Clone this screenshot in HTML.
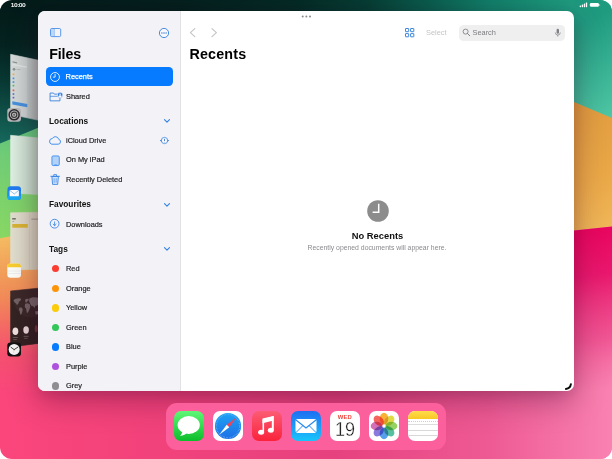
<!DOCTYPE html>
<html><head><meta charset="utf-8">
<style>
html,body{margin:0;padding:0;background:#fff;}
body{width:612px;height:459px;overflow:hidden;position:relative;font-family:"Liberation Sans",sans-serif;}
#screen{position:absolute;left:0;top:0;width:612px;height:459px;border-radius:12px;overflow:hidden;background:none;}
#wall{position:absolute;left:0;top:0;}
.abs{position:absolute;}
#status-time{left:11px;top:2.200px;color:#fff;font-size:5.850px;line-height:7px;-webkit-text-stroke:0.220px #fff;}
#win{left:38px;top:10.700px;width:536px;height:380.800px;border-radius:7px;overflow:hidden;background:#fff;box-shadow:0 10px 30px rgba(60,0,40,0.36),0 3px 12px rgba(40,0,30,0.08);}
#side{left:0;top:0;width:142px;height:100%;background:#f2f2f7;border-right:0.5px solid #e2e2e6;}
.row{position:absolute;left:28px;font-size:7.4px;color:#1c1c1e;line-height:10px;white-space:nowrap;-webkit-text-stroke:0.180px #1c1c1e;}
.hd{position:absolute;left:11px;font-size:8.3px;font-weight:bold;color:#111;line-height:10px;white-space:nowrap;}
.dot{position:absolute;left:13.500px;width:7.500px;height:7.500px;border-radius:50%;}
.title{font-size:14.300px;font-weight:bold;color:#000;line-height:16px;letter-spacing:0.200px;}
#dock{left:165.5px;top:402.700px;width:280.800px;height:47.200px;border-radius:11px;background:#fb609c;}
.app{position:absolute;top:8.200px;width:30px;height:30px;border-radius:7px;overflow:hidden;}
</style></head><body>
<div id="screen">
<svg id="wall" width="612" height="459" viewBox="0 0 612 459">
<defs>
<linearGradient id="gtop" gradientUnits="userSpaceOnUse" x1="0" y1="0" x2="612" y2="0">
<stop offset="0" stop-color="#031a19"/><stop offset="0.3" stop-color="#03201d"/><stop offset="0.48" stop-color="#032a25"/><stop offset="0.6" stop-color="#053d33"/><stop offset="0.7" stop-color="#095c4d"/><stop offset="0.8" stop-color="#107e68"/><stop offset="0.9" stop-color="#1a957a"/><stop offset="0.94" stop-color="#1f9b80"/><stop offset="1" stop-color="#27a689"/>
</linearGradient>
<linearGradient id="gleftdark" gradientUnits="userSpaceOnUse" x1="0" y1="0" x2="0" y2="145">
<stop offset="0" stop-color="#031a19"/><stop offset="0.3" stop-color="#04221f"/><stop offset="0.55" stop-color="#083732"/><stop offset="0.75" stop-color="#0e4d45"/><stop offset="1" stop-color="#176a5e"/>
</linearGradient>
<linearGradient id="ggreen" gradientUnits="userSpaceOnUse" x1="0" y1="125" x2="0" y2="245">
<stop offset="0" stop-color="#5cc27c"/><stop offset="0.25" stop-color="#70cc76"/><stop offset="0.6" stop-color="#7cd26c"/><stop offset="1" stop-color="#8ad862"/>
</linearGradient>
<linearGradient id="gorange" gradientUnits="userSpaceOnUse" x1="0" y1="236" x2="0" y2="400">
<stop offset="0" stop-color="#f5bc62"/><stop offset="0.2" stop-color="#f1a15a"/><stop offset="0.38" stop-color="#f18958"/><stop offset="0.55" stop-color="#f46a64"/><stop offset="0.72" stop-color="#f4506f"/><stop offset="0.95" stop-color="#fa467b"/><stop offset="1" stop-color="#fa467b"/>
</linearGradient>
<linearGradient id="gbot" gradientUnits="userSpaceOnUse" x1="0" y1="0" x2="612" y2="0">
<stop offset="0" stop-color="#fa467b"/><stop offset="0.25" stop-color="#f2427b"/><stop offset="0.55" stop-color="#e6427f"/><stop offset="0.8" stop-color="#ee5a94"/><stop offset="1" stop-color="#f982b2"/>
</linearGradient>
<linearGradient id="gteal" gradientUnits="userSpaceOnUse" x1="574" y1="0" x2="625" y2="110">
<stop offset="0" stop-color="#1d997e"/><stop offset="0.2" stop-color="#1f9b80"/><stop offset="1" stop-color="#4ec6a4"/>
</linearGradient>
<linearGradient id="gor2" gradientUnits="userSpaceOnUse" x1="574" y1="100" x2="620" y2="230">
<stop offset="0" stop-color="#df9a3e"/><stop offset="0.6" stop-color="#eaa848"/><stop offset="1" stop-color="#f0b85a"/>
</linearGradient>
<linearGradient id="gmag" gradientUnits="userSpaceOnUse" x1="574" y1="228" x2="595" y2="391">
<stop offset="0" stop-color="#e9045e"/><stop offset="0.3" stop-color="#e8126a" stop-opacity="0.95"/><stop offset="0.7" stop-color="#ea3a80" stop-opacity="0.6"/><stop offset="1" stop-color="#ee5a94" stop-opacity="0"/>
</linearGradient>
<linearGradient id="th1" x1="0" y1="0" x2="1" y2="0"><stop offset="0" stop-color="#d6dcdb"/><stop offset="0.55" stop-color="#c6cecc"/><stop offset="0.58" stop-color="#bac4c1"/><stop offset="1" stop-color="#a3aeab"/></linearGradient>
<linearGradient id="th2" x1="0" y1="0" x2="1" y2="0"><stop offset="0" stop-color="#e0efe4"/><stop offset="0.5" stop-color="#cbe0d0"/><stop offset="1" stop-color="#b0c9b6"/></linearGradient>
<linearGradient id="th3" x1="0" y1="0" x2="1" y2="0"><stop offset="0" stop-color="#e1dfd0"/><stop offset="0.5" stop-color="#d9d6c4"/><stop offset="1" stop-color="#c9c5af"/></linearGradient>
<linearGradient id="th4" x1="0" y1="0" x2="1" y2="0"><stop offset="0" stop-color="#3d2b2b"/><stop offset="1" stop-color="#352424"/></linearGradient>
<filter id="b1" x="-20%" y="-20%" width="140%" height="140%"><feGaussianBlur stdDeviation="0.5"/></filter>
</defs>
<!-- bottom -->
<rect x="0" y="340" width="612" height="119" fill="url(#gbot)"/>
<!-- top -->
<rect x="0" y="0" width="612" height="40" fill="url(#gtop)"/>
<!-- left strip -->
<rect x="0" y="8" width="60" height="140" fill="url(#gleftdark)"/>
<polygon points="0,143.500 60,118.700 60,260 0,260" fill="url(#ggreen)"/>
<polygon points="0,238.300 60,227 60,392 0,392" fill="url(#gorange)"/>
<!-- right strip -->
<rect x="560" y="0" width="52" height="130" fill="url(#gteal)"/>
<rect x="540" y="0" width="34" height="11" fill="url(#gtop)"/>
<polygon points="560,96 574,101.900 612,118 612,240 560,240" fill="url(#gor2)"/>
<polygon points="560,232.100 612,226.500 612,459 560,459" fill="url(#gbot)"/>
<polygon points="560,232.100 612,226.500 612,459 574,459 574,391 560,391" fill="url(#gmag)"/>
<!-- stage manager thumbnails -->
<g>
<polygon points="10.600,54.300 40,60.600 40,120.600 10.600,114.300" fill="url(#th1)" stroke="url(#th1)" stroke-width="0.600" stroke-linejoin="round"/>
<rect x="12.300" y="101.300" width="15" height="3.200" fill="#4590dc" transform="skewY(10)" transform-origin="12.300 101.300"/>
<rect x="12.300" y="63.700" width="14.500" height="1.600" rx="0.600" fill="#e2e7e6" opacity="0.750" transform="skewY(10)" transform-origin="12.300 63.700"/><g fill="#8a9393"><rect x="12.500" y="61.300" width="4.600" height="1.100" transform="skewY(12)" transform-origin="12.500 62"/><circle cx="14" cy="69.300" r="1.400"/><rect x="16.500" y="69.300" width="4" height="0.700" opacity="0.600"/></g>
<g><rect x="12.600" y="73.500" width="1.700" height="1.700" fill="#f3a93a"/><rect x="12.600" y="77.500" width="1.700" height="1.700" fill="#4a90e2"/><rect x="12.600" y="81.200" width="1.700" height="1.700" fill="#4a90e2"/><rect x="12.600" y="84.800" width="1.700" height="1.700" fill="#53b868"/><rect x="12.600" y="89.500" width="1.700" height="1.700" fill="#e45a5a"/><rect x="12.600" y="93.200" width="1.700" height="1.700" fill="#5b6fd0"/><rect x="12.600" y="96.800" width="1.700" height="1.700" fill="#6a5fd0"/></g>
<polygon points="10.600,135.300 40,138.100 40,194.500 10.600,193.200" fill="url(#th2)" stroke="url(#th2)" stroke-width="0.600" stroke-linejoin="round"/>
<polygon points="10.600,212.800 40,212.200 40,269.300 10.600,270" fill="url(#th3)" stroke="url(#th3)" stroke-width="0.600" stroke-linejoin="round"/>
<rect x="12.300" y="224" width="15.500" height="3.700" fill="#d6b332"/>
<rect x="12.200" y="218.300" width="3.600" height="1.100" fill="#2a2a2a" opacity="0.850"/><rect x="12.400" y="221.300" width="1.800" height="0.600" fill="#8a8a80"/><rect x="31.300" y="218.700" width="6.700" height="0.800" fill="#77776c" opacity="0.800"/><rect x="29" y="214" width="0.400" height="55" fill="#bdb9a4" opacity="0.700"/>
<polygon points="10.600,291 40,288 40,343.200 10.600,347" fill="url(#th4)" stroke="url(#th4)" stroke-width="0.600" stroke-linejoin="round"/>
<g fill="#85767a" opacity="0.750"><path d="M13.500 300.200l2-1.400 3.500-.5 2.200.4-.6 1.800-1.800 1.300-.4 2-1.500 1.200-.9-1.600-1.700-1.300z"/><path d="M19.700 307.400l1.800.2 1.300 1.600-.6 2.800-1.200 3-.9-.4-.3-3.200-.9-2z"/><path d="M25 299.800l1.600-1.100 1.800.1.400 1.500-1.300.7-.3 1.200-1.700.2z"/><path d="M25.100 303.800l2.700-.5 2 1 .5 2.800-1.300 3.300-1.200 2.400-1.100-.3-.5-3.400-1.500-2.300z"/><path d="M29.300 298.600l3.500-1.300 4.500.2 1.700 1.200v4.700l-1.800 2-1.900.4-.7 2.300-1.400-1.800-1.700-.4-1.500-2.300-1-2.500z"/><path d="M35 311.500l2.500-.5 1.200 1.700-.6 1.600-2.300.2z"/></g><path d="M10.600 296q6 17 13 20t16.400 0v27.200l-29.400 3.800z" fill="#241818" opacity="0.350"/>
<ellipse cx="15.400" cy="331.300" rx="2.900" ry="3.800" fill="#efe0e0"/><ellipse cx="26.100" cy="330" rx="2.800" ry="3.700" fill="#ebd6d8"/><ellipse cx="36.200" cy="328.800" rx="1.500" ry="3.500" fill="#6a3436"/><g fill="#9a8686" opacity="0.700"><rect x="12.800" y="337.300" width="5" height="0.700"/><rect x="13.300" y="339.300" width="3.600" height="0.600"/><rect x="23.600" y="335.900" width="5" height="0.700"/><rect x="24.100" y="337.900" width="3.600" height="0.600"/></g>
</g>
<!-- thumbnail app icons -->
<g>
<rect x="7.300" y="107.900" width="13.700" height="13.900" rx="3.200" fill="#b9b9bb"/><circle cx="14.150" cy="114.850" r="5" fill="none" stroke="#2b2b2d" stroke-width="1.500"/><circle cx="14.150" cy="114.850" r="2.700" fill="none" stroke="#3a3a3c" stroke-width="1.100"/><circle cx="14.150" cy="114.850" r="1" fill="#666"/>
<rect x="7.500" y="186.300" width="13.500" height="13.700" rx="3.200" fill="#1f7cf0"/><rect x="7.500" y="193" width="13.500" height="7" rx="3.200" fill="#1ba8f4"/><rect x="7.500" y="191" width="13.500" height="5" fill="#1e90f2"/><rect x="9.600" y="190" width="9.300" height="6.300" rx="0.900" fill="#fff"/><path d="M9.800 190.400L14.250 194L18.700 190.400" fill="none" stroke="#4a9bf0" stroke-width="0.600"/>
<rect x="7.300" y="263.600" width="13.700" height="14.200" rx="3.200" fill="#fbfbf8"/><path d="M7.300 267.300V266.800a3.200 3.200 0 0 1 3.200-3.200h7.300a3.200 3.200 0 0 1 3.200 3.200V267.300z" fill="#f7cd2e"/><rect x="7.300" y="270.800" width="13.700" height="0.400" fill="#d9d9d9"/><rect x="7.300" y="273.500" width="13.700" height="0.400" fill="#d9d9d9"/>
<rect x="7.300" y="342.400" width="13.700" height="14" rx="3.200" fill="#121212"/><circle cx="14.150" cy="349.400" r="5.500" fill="#f6f6f6"/><path d="M14.150 349.600L11 347.300M14.150 349.600L17.800 347.200" stroke="#1a1a1a" stroke-width="0.800" stroke-linecap="round"/><path d="M14.150 349.600L13.300 353.300" stroke="#e8902a" stroke-width="0.300" opacity="0.700"/>
</g>
</svg>

<div id="status-time" class="abs">10:00</div>
<svg class="abs" style="left:577.500px;top:1.200px" width="30" height="8" viewBox="0 0 30 8">
<rect x="1.700" y="4.500" width="1.300" height="1.700" rx="0.350" fill="#fff"/><rect x="3.750" y="3.600" width="1.300" height="2.600" rx="0.350" fill="#fff"/><rect x="5.800" y="2.600" width="1.300" height="3.600" rx="0.350" fill="#fff"/><rect x="7.850" y="1.500" width="1.300" height="4.700" rx="0.350" fill="#fff"/>
<rect x="11.900" y="2.100" width="9" height="3.700" rx="1.200" fill="#fff"/><rect x="21.300" y="3.200" width="0.800" height="1.500" rx="0.300" fill="#fff" opacity="0.750"/>
</svg>

<div id="win" class="abs">
 <div id="side" class="abs">
  <svg class="abs" style="left:11.700px;top:17.200px" width="13" height="10" viewBox="0 0 13 10"><rect x="0.500" y="0.500" width="10.200" height="8.100" rx="1.300" fill="none" stroke="#4189ea" stroke-width="0.850"/><line x1="4" y1="0.500" x2="4" y2="8.600" stroke="#4189ea" stroke-width="0.750"/><rect x="1" y="1" width="2.800" height="7.100" fill="#bcd8f8"/></svg>
  <svg class="abs" style="left:120.050px;top:15.900px" width="12" height="12" viewBox="0 0 12 12"><circle cx="6" cy="6" r="4.600" fill="#f8f9fe" stroke="#3f85dc" stroke-width="0.950"/><circle cx="3.900" cy="6" r="0.650" fill="#2a6ac8"/><circle cx="6" cy="6" r="0.650" fill="#2a6ac8"/><circle cx="8.100" cy="6" r="0.650" fill="#2a6ac8"/></svg>
  <div class="abs title" style="left:11.200px;top:35.600px;font-size:14.200px;letter-spacing:-0.100px">Files</div>
  <div class="abs" style="left:7.500px;top:56.400px;width:127.900px;height:19px;border-radius:4.200px;background:#077bff"></div>
  <svg class="abs" style="left:10.900px;top:60.200px" width="12" height="12" viewBox="0 0 12 12"><circle cx="6" cy="6" r="4.450" fill="none" stroke="#fff" stroke-width="0.900" opacity="0.950"/><path d="M6.100 3V6.100H3.900" fill="none" stroke="#fff" stroke-width="0.850"/></svg>
  <div class="row" style="left:27.600px;top:61.100px;color:#fff;-webkit-text-stroke:0.250px #fff">Recents</div>
  <svg class="abs" style="left:10.500px;top:80px" width="15" height="12" viewBox="0 0 15 12"><path d="M1.050 9.850V2.050H4.500L5.400 3.150H10.950V9.850Z" fill="none" stroke="#3b82dc" stroke-width="0.900" stroke-linejoin="round"/><line x1="1.050" y1="5.300" x2="10.950" y2="5.300" stroke="#3b82dc" stroke-width="0.750"/><circle cx="11.100" cy="3.900" r="2.750" fill="#2f7be0" stroke="#f2f2f7" stroke-width="0.700"/><circle cx="11.100" cy="3.200" r="0.800" fill="#fff"/><path d="M9.500 5.600a1.600 1.300 0 0 1 3.200 0a2.600 2.600 0 0 1-3.200 0z" fill="#fff"/></svg>
  <div class="row" style="top:81px">Shared</div>
  <div class="hd" style="top:105px">Locations</div>
  <svg class="abs" style="left:125px;top:107.800px" width="8" height="6" viewBox="0 0 8 6"><path d="M1.500 1.700L4 4.200L6.500 1.700" fill="none" stroke="#3584e4" stroke-width="1.150" stroke-linecap="round" stroke-linejoin="round"/></svg>
  <svg class="abs" style="left:10.100px;top:123.700px" width="14" height="12" viewBox="0 0 14 12"><path d="M3.700 10.200H10.200A2.500 2.500 0 0 0 10.700 5.300A3.400 3.400 0 0 0 4.400 4.500A2.900 2.900 0 0 0 3.700 10.200Z" fill="none" stroke="#2f86f0" stroke-width="0.9" stroke-linejoin="round"/></svg>
  <div class="row" style="top:125px">iCloud Drive</div>
  <svg class="abs" style="left:120.900px;top:124.200px" width="11" height="11" viewBox="0 0 11 11"><circle cx="5.500" cy="5.500" r="3.150" fill="#f9fbff" stroke="#4088e0" stroke-width="0.800"/><path d="M0.900 5.600L2.500 4.500V6.700Z" fill="#2f74d4"/><path d="M10.100 5.600L8.500 4.500V6.700Z" fill="#2f74d4"/><line x1="5.500" y1="3.800" x2="5.500" y2="6" stroke="#2c64bc" stroke-width="0.800"/><circle cx="5.500" cy="7.100" r="0.450" fill="#2c64bc"/></svg>
  <svg class="abs" style="left:12.500px;top:144px" width="10" height="12" viewBox="0 0 10 12"><rect x="0.950" y="0.950" width="7.300" height="9.600" rx="1.200" fill="#b3d2f8" stroke="#3b8cf0" stroke-width="0.900"/><line x1="3.300" y1="9.700" x2="5.900" y2="9.700" stroke="#3b8cf0" stroke-width="0.600"/></svg>
  <div class="row" style="top:144.500px">On My iPad</div>
  <svg class="abs" style="left:12px;top:162.500px" width="11" height="13" viewBox="0 0 11 13"><path d="M1.900 3.500L2.600 11.400H7.700L8.400 3.500Z" fill="#d3e4fb" stroke="#3b86e4" stroke-width="0.900" stroke-linejoin="round"/><line x1="0.800" y1="3.300" x2="9.500" y2="3.300" stroke="#3b86e4" stroke-width="0.950" stroke-linecap="round"/><path d="M3.800 3.100V1.600H6.500V3.100" fill="none" stroke="#3b86e4" stroke-width="0.850"/><line x1="4.100" y1="5.200" x2="4.200" y2="9.800" stroke="#3b86e4" stroke-width="0.650"/><line x1="6.200" y1="5.200" x2="6.100" y2="9.800" stroke="#3b86e4" stroke-width="0.650"/></svg>
  <div class="row" style="top:164px">Recently Deleted</div>
  <div class="hd" style="top:188.500px">Favourites</div>
  <svg class="abs" style="left:125px;top:191.400px" width="8" height="6" viewBox="0 0 8 6"><path d="M1.500 1.700L4 4.200L6.500 1.700" fill="none" stroke="#3584e4" stroke-width="1.150" stroke-linecap="round" stroke-linejoin="round"/></svg>
  <svg class="abs" style="left:11px;top:207.500px" width="12" height="12" viewBox="0 0 12 12"><circle cx="5.600" cy="5.700" r="4.400" fill="none" stroke="#3b86e4" stroke-width="0.900"/><path d="M5.600 3.900V7.500M4.100 6.200L5.600 7.700L7.100 6.200" fill="none" stroke="#3b86e4" stroke-width="0.850" stroke-linecap="round" stroke-linejoin="round"/></svg>
  <div class="row" style="top:209.200px">Downloads</div>
  <div class="hd" style="top:233px">Tags</div>
  <svg class="abs" style="left:125px;top:235.800px" width="8" height="6" viewBox="0 0 8 6"><path d="M1.500 1.700L4 4.200L6.500 1.700" fill="none" stroke="#3584e4" stroke-width="1.150" stroke-linecap="round" stroke-linejoin="round"/></svg>
  <div class="dot" style="top:254.30px;background:#fb3c30"></div><div class="row" style="top:253.30px">Red</div>
  <div class="dot" style="top:273.88px;background:#fc9409"></div><div class="row" style="top:272.88px">Orange</div>
  <div class="dot" style="top:293.46px;background:#fccb0a"></div><div class="row" style="top:292.46px">Yellow</div>
  <div class="dot" style="top:313.04px;background:#33c659"></div><div class="row" style="top:312.04px">Green</div>
  <div class="dot" style="top:332.62px;background:#067bfe"></div><div class="row" style="top:331.62px">Blue</div>
  <div class="dot" style="top:352.20px;background:#ae52dd"></div><div class="row" style="top:351.20px">Purple</div>
  <div class="dot" style="top:371.78px;background:#8e8e92"></div><div class="row" style="top:370.78px">Grey</div>
 </div>
 <!-- main -->
 <svg class="abs" style="left:262px;top:3px" width="14" height="5" viewBox="0 0 14 5"><circle cx="2.700" cy="2.400" r="1" fill="#8a8a8d"/><circle cx="6.350" cy="2.400" r="1" fill="#8a8a8d"/><circle cx="10" cy="2.400" r="1" fill="#8a8a8d"/></svg>
 <svg class="abs" style="left:151px;top:17px" width="32" height="10" viewBox="0 0 32 10"><path d="M5.800 0.600L1.400 4.600L5.800 8.600" fill="none" stroke="#c5c5c8" stroke-width="1.200" stroke-linecap="round" stroke-linejoin="round"/><path d="M23 0.600L27.400 4.600L23 8.600" fill="none" stroke="#c5c5c8" stroke-width="1.200" stroke-linecap="round" stroke-linejoin="round"/></svg>
 <div class="abs title" style="left:151.400px;top:35.700px">Recents</div>
 <svg class="abs" style="left:366.900px;top:17.300px" width="10" height="10" viewBox="0 0 10 10"><g fill="none" stroke="#3f87dc" stroke-width="1"><rect x="0.500" y="0.500" width="3.200" height="3.200" rx="0.300"/><rect x="5.600" y="0.500" width="3.200" height="3.200" rx="0.300"/><rect x="0.500" y="5.600" width="3.200" height="3.200" rx="0.300"/><rect x="5.600" y="5.600" width="3.200" height="3.200" rx="0.300"/></g></svg>
 <div class="abs" style="left:388px;top:17px;font-size:7.400px;color:#c4c4c8;line-height:10px">Select</div>
 <div class="abs" style="left:420.700px;top:14px;width:106.300px;height:16px;border-radius:4.500px;background:#efeff0"></div>
 <svg class="abs" style="left:423.500px;top:17.500px" width="9" height="9" viewBox="0 0 9 9"><circle cx="3.600" cy="3.600" r="2.500" fill="none" stroke="#77777b" stroke-width="0.800"/><line x1="5.500" y1="5.500" x2="7.800" y2="7.800" stroke="#77777b" stroke-width="0.900" stroke-linecap="round"/></svg>
 <div class="abs" style="left:434.500px;top:17px;font-size:7.400px;color:#7c7c80;line-height:10px">Search</div>
 <svg class="abs" style="left:515.500px;top:17px" width="8" height="10" viewBox="0 0 8 10"><rect x="2.600" y="0.800" width="2.400" height="5" rx="1.200" fill="#808084"/><path d="M1.300 4.500A2.500 2.500 0 0 0 6.300 4.500M3.800 7V8.600" fill="none" stroke="#808084" stroke-width="0.700"/></svg>
 <!-- empty state -->
 <svg class="abs" style="left:327.500px;top:188.600px" width="24" height="24" viewBox="0 0 24 24"><circle cx="12" cy="12" r="10.800" fill="#8c8c8c"/><path d="M12.700 4.700V13.200H6.600" fill="none" stroke="#fff" stroke-width="1.500"/></svg>
 <div class="abs" style="left:239.500px;width:200px;top:219.300px;text-align:center;font-size:9.350px;font-weight:bold;color:#111;line-height:12px">No Recents</div>
 <div class="abs" style="left:239px;width:200px;top:233.600px;text-align:center;font-size:6.850px;color:#8a8a8e;line-height:8px">Recently opened documents will appear here.</div>
 <svg class="abs" style="left:524px;top:369px" width="12" height="12" viewBox="0 0 12 12"><path d="M8.900 4.200A5.600 5.600 0 0 1 3.900 9" fill="none" stroke="#0a0a0a" stroke-width="1.900" stroke-linecap="round"/></svg>
</div>

<div id="dock" class="abs">
 <div class="app" style="left:8.70px;background:linear-gradient(#5ff777,#0bbd2a)"><svg width="30" height="30" viewBox="0 0 30 30"><ellipse cx="14.700" cy="14" rx="11.100" ry="9" fill="#fff"/><path d="M8.500 19.500C8.300 22 7.500 23.600 6 24.700C8.600 24.800 11 23.800 12.600 22Z" fill="#fff"/></svg></div>
 <div class="app" style="left:47.60px;background:#fff"><svg width="30" height="30" viewBox="0 0 30 30"><defs><linearGradient id="saf" x1="0" y1="0" x2="0" y2="1"><stop offset="0" stop-color="#1fa2f3"/><stop offset="1" stop-color="#1c6fe6"/></linearGradient></defs><circle cx="15" cy="15" r="13.100" fill="url(#saf)"/><circle cx="15" cy="15" r="11.700" fill="none" stroke="#8fcbff" stroke-width="1.400" stroke-dasharray="0.450 1.080" opacity="0.800"/><path d="M23.700 6.300L13.700 13.700L16.300 16.300Z" fill="#ee4458"/><path d="M6.300 23.700L13.700 13.700L16.300 16.300Z" fill="#fff"/></svg></div>
 <div class="app" style="left:86.50px;background:linear-gradient(#fb5c74,#f9233b)"><svg width="30" height="30" viewBox="0.700 0.600 30 30"><path d="M12 9.500L21.500 7V19.500" fill="none" stroke="#fff" stroke-width="2"/><path d="M12 9V21.500" fill="none" stroke="#fff" stroke-width="1.600"/><path d="M11.200 8.200L22.300 5.500V10L11.200 12.800Z" fill="#fff"/><ellipse cx="9.800" cy="21.800" rx="3" ry="2.500" fill="#fff"/><ellipse cx="19.500" cy="19.800" rx="3" ry="2.500" fill="#fff"/></svg></div>
 <div class="app" style="left:125.40px;background:linear-gradient(#1e6ff2,#19c5fb)"><svg width="30" height="30" viewBox="0 0 30 30"><rect x="4.500" y="8" width="21" height="14" rx="2" fill="#fff"/><path d="M5 9L15 17L25 9" fill="none" stroke="#2a8cf0" stroke-width="1.300"/><path d="M5 21.500L12 14.500M25 21.500L18 14.500" fill="none" stroke="#2a8cf0" stroke-width="1"/></svg></div>
 <div class="app" style="left:164.30px;background:#fff"><div class="abs" style="left:0;width:30px;top:3.300px;text-align:center;font-size:5.900px;font-weight:bold;color:#f0453a;line-height:6px;letter-spacing:0.150px">WED</div><div class="abs" style="left:0;width:30px;top:8.200px;text-align:center;font-size:19.400px;color:#1a1a1a;line-height:20px;transform:scaleX(0.930);-webkit-text-stroke:0.350px #fff">19</div></div>
 <div class="app" style="left:203.20px;background:#fff"><svg width="30" height="30" viewBox="0 0 30 30"><g transform="translate(15 15)" style="isolation:isolate"><g style="mix-blend-mode:multiply" opacity="0.880"><ellipse style="mix-blend-mode:multiply" cx="0" cy="-7.400" rx="4.300" ry="5.900" fill="#f9a51a" transform="rotate(0)"/><ellipse style="mix-blend-mode:multiply" cx="0" cy="-7.400" rx="4.300" ry="5.900" fill="#dcd52c" transform="rotate(45)"/><ellipse style="mix-blend-mode:multiply" cx="0" cy="-7.400" rx="4.300" ry="5.900" fill="#86cc4c" transform="rotate(90)"/><ellipse style="mix-blend-mode:multiply" cx="0" cy="-7.400" rx="4.300" ry="5.900" fill="#3fb894" transform="rotate(135)"/><ellipse style="mix-blend-mode:multiply" cx="0" cy="-7.400" rx="4.300" ry="5.900" fill="#3f93e6" transform="rotate(180)"/><ellipse style="mix-blend-mode:multiply" cx="0" cy="-7.400" rx="4.300" ry="5.900" fill="#7b68d6" transform="rotate(225)"/><ellipse style="mix-blend-mode:multiply" cx="0" cy="-7.400" rx="4.300" ry="5.900" fill="#cf5cae" transform="rotate(270)"/><ellipse style="mix-blend-mode:multiply" cx="0" cy="-7.400" rx="4.300" ry="5.900" fill="#f2504a" transform="rotate(315)"/></g></g></svg></div>
 <div class="app" style="left:242.10px;background:#fff"><div class="abs" style="left:0;top:0;width:30px;height:7.900px;background:linear-gradient(#fedb4c,#f9c924)"></div><div class="abs" style="left:0;top:10.600px;width:30px;height:0;border-top:0.700px dotted #cfcfcf"></div><div class="abs" style="left:0;top:13.500px;width:30px;height:0.600px;background:#dcdcdc"></div><div class="abs" style="left:0;top:19px;width:30px;height:0.600px;background:#d8d8d8"></div><div class="abs" style="left:0;top:24.500px;width:30px;height:0.600px;background:#d8d8d8"></div></div>
</div>
</div>
</body></html>
